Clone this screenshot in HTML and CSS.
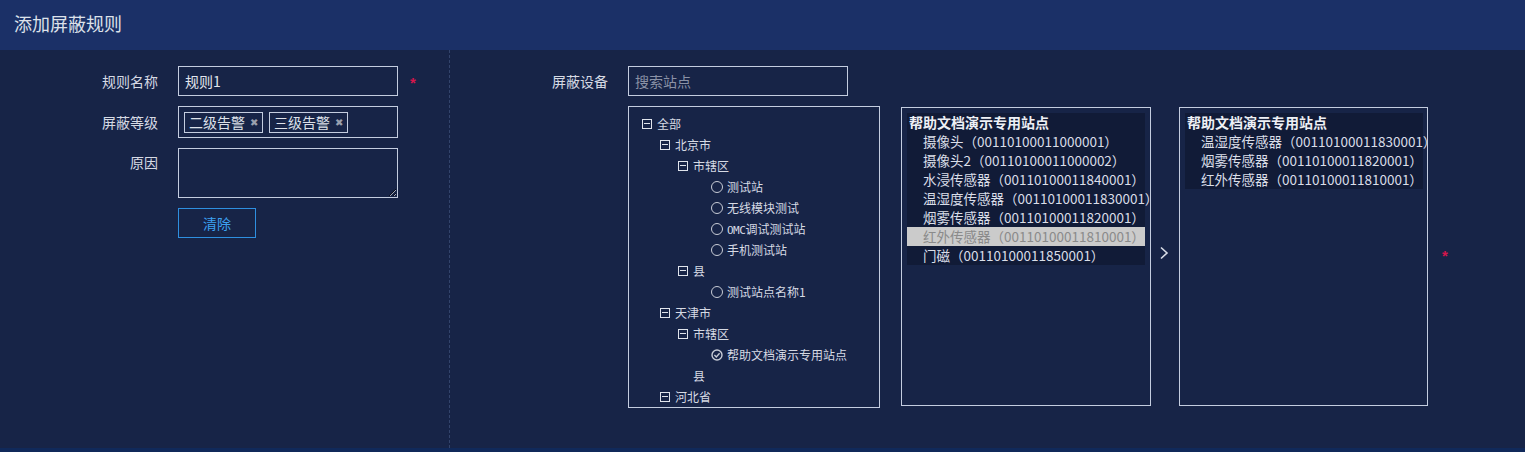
FILE: index.html
```html
<!DOCTYPE html>
<html lang="zh">
<head>
<meta charset="utf-8">
<title>添加屏蔽规则</title>
<link rel="stylesheet" href="styles.css">
</head>
<body>
<div class="page">
  <div class="header">添加屏蔽规则</div>
  <div class="main">
    <div class="left">
      <div class="row">
        <label class="label">规则名称</label>
        <input class="input" type="text" value="规则1">
        <span class="star">*</span>
      </div>
      <div class="row">
        <label class="label">屏蔽等级</label>
        <div class="tags">
          <span class="tag">二级告警<span class="tag-x">✖</span></span>
          <span class="tag">三级告警<span class="tag-x">✖</span></span>
        </div>
      </div>
      <div class="row row-top">
        <label class="label">原因</label>
        <textarea class="textarea"></textarea>
      </div>
      <div class="row">
        <span class="label"></span>
        <button class="btn">清除</button>
      </div>
    </div>
    <div class="right">
      <div class="row">
        <label class="label">屏蔽设备</label>
        <input class="input search" type="text" placeholder="搜索站点">
      </div>
      <div class="row row-top">
        <span class="label"></span>
        <div class="tree">
          <div class="node l0"><span class="sw minus"></span><span class="txt">全部</span></div>
          <div class="node l1"><span class="sw minus"></span><span class="txt">北京市</span></div>
          <div class="node l2"><span class="sw minus"></span><span class="txt">市辖区</span></div>
          <div class="node l3"><span class="sw"></span><span class="radio"></span><span class="txt">测试站</span></div>
          <div class="node l3"><span class="sw"></span><span class="radio"></span><span class="txt">无线模块测试</span></div>
          <div class="node l3"><span class="sw"></span><span class="radio"></span><span class="txt"><span class="mono">OMC</span>调试测试站</span></div>
          <div class="node l3"><span class="sw"></span><span class="radio"></span><span class="txt">手机测试站</span></div>
          <div class="node l2"><span class="sw minus"></span><span class="txt">县</span></div>
          <div class="node l3"><span class="sw"></span><span class="radio"></span><span class="txt">测试站点名称1</span></div>
          <div class="node l1"><span class="sw minus"></span><span class="txt">天津市</span></div>
          <div class="node l2"><span class="sw minus"></span><span class="txt">市辖区</span></div>
          <div class="node l3"><span class="sw"></span><span class="radio checked"><svg viewBox="0 0 12 12" width="12" height="12"><circle cx="6" cy="6" r="5" fill="none" stroke="#c8ccd6" stroke-width="1.4"/><path d="M3.4 6.1 L5.3 7.9 L8.6 4.3" fill="none" stroke="#c8ccd6" stroke-width="1.4"/></svg></span><span class="txt">帮助文档演示专用站点</span></div>
          <div class="node l2"><span class="sw"></span><span class="txt">县</span></div>
          <div class="node l1"><span class="sw minus"></span><span class="txt">河北省</span></div>
        </div>
        <div class="list list-src">
          <div class="panel">
            <div class="group">帮助文档演示专用站点</div>
            <div class="item">摄像头（00110100011000001）</div>
            <div class="item">摄像头2（00110100011000002）</div>
            <div class="item">水浸传感器（00110100011840001）</div>
            <div class="item">温湿度传感器（00110100011830001）</div>
            <div class="item">烟雾传感器（00110100011820001）</div>
            <div class="item selected">红外传感器（00110100011810001）</div>
            <div class="item">门磁（00110100011850001）</div>
          </div>
        </div>
        <div class="arrow">
          <svg viewBox="0 0 10 14" width="10" height="14"><path d="M2 1.5 L8 7 L2 12.5" fill="none" stroke="#d8dce6" stroke-width="1.6"/></svg>
        </div>
        <div class="list list-dst">
          <div class="panel">
            <div class="group">帮助文档演示专用站点</div>
            <div class="item">温湿度传感器（00110100011830001）</div>
            <div class="item">烟雾传感器（00110100011820001）</div>
            <div class="item">红外传感器（00110100011810001）</div>
          </div>
        </div>
        <span class="star star-mid">*</span>
      </div>
    </div>
  </div>
  <div class="footer"></div>
</div>
</body>
</html>
```

FILE: styles.css
```css
* { box-sizing: border-box; }
html, body { margin: 0; padding: 0; }
body {
  background: #172447;
  color: #d6dae4;
  font-family: "Noto Sans CJK SC", "Noto Sans", sans-serif;
  font-size: 14px;
}
.page { width: 1525px; height: 452px; display: flex; flex-direction: column; overflow: hidden; }
.header {
  height: 50px;
  background: #1b3067;
  color: #dde1ea;
  font-size: 18px;
  display: flex;
  align-items: center;
  padding-left: 14px;
  padding-bottom: 4px;
  flex: none;
}
.main { flex: 1; display: flex; }
.footer { height: 4px; background: #10295a; flex: none; }
.left {
  width: 450px;
  border-right: 1px dashed #33446c;
  padding-top: 16px;
  display: flex;
  flex-direction: column;
  gap: 10px;
}
.right {
  flex: 1;
  padding-top: 16px;
  display: flex;
  flex-direction: column;
  gap: 10px;
}
.row { display: flex; align-items: center; }
.row-top { align-items: flex-start; }
.label {
  width: 158px;
  margin-right: 20px;
  text-align: right;
  color: #d6dae4;
  font-size: 14px;
  flex: none;
}
.row-top .label { padding-top: 4px; }
.input {
  width: 220px;
  height: 30px;
  background: transparent;
  border: 1px solid #c4cde0;
  color: #e2e6ee;
  font-family: inherit;
  font-size: 14px;
  padding: 0 6px;
  outline: none;
}
.search::placeholder { color: #8a92a6; }
.star {
  color: #d3164c;
  font-family: "Liberation Sans", sans-serif;
  font-weight: bold;
  font-size: 15px;
  margin-left: 12px;
  line-height: 1;
  padding-top: 2px;
}
.tags {
  width: 220px;
  height: 32px;
  border: 1px solid #c4cde0;
  display: flex;
  align-items: center;
  gap: 6px;
  padding-left: 5px;
}
.tag {
  height: 21px;
  border: 1px solid #c4cde0;
  display: inline-flex;
  align-items: center;
  padding: 0 4px 0 4px;
  font-size: 14px;
  color: #dde1ea;
  line-height: 1;
}
.tag-x { color: #9aa0ae; font-size: 10px; margin-left: 5px; }
.textarea {
  width: 220px;
  height: 50px;
  background: transparent;
  border: 1px solid #c4cde0;
  color: #e2e6ee;
  resize: vertical;
  font-family: inherit;
  outline: none;
}
.btn {
  width: 78px;
  height: 30px;
  background: transparent;
  border: 1px solid #2e8fe0;
  color: #3da2f2;
  font-family: inherit;
  font-size: 14px;
  padding: 0;
}
.tree {
  width: 252px;
  height: 302px;
  border: 1px solid #c4cde0;
  padding: 6px 0 0 13px;
  overflow: hidden;
  font-size: 12px;
  flex: none;
}
.node { height: 21px; display: flex; align-items: center; white-space: nowrap; color: #d6dae4; }
.l1 { padding-left: 18px; }
.l2 { padding-left: 36px; }
.l3 { padding-left: 54px; }
.sw { width: 10px; height: 10px; margin-right: 5px; flex: none; }
.minus { border: 1px solid #e0e4ec; position: relative; }
.minus::after {
  content: "";
  position: absolute;
  left: 1px; right: 1px; top: 3px;
  height: 1px;
  background: #e0e4ec;
}
.radio {
  width: 12px; height: 12px;
  border: 1.5px solid #c8ccd6;
  border-radius: 50%;
  margin-right: 4px;
  flex: none;
}
.radio.checked { border: none; display: flex; }
.mono { font-family: "DejaVu Sans Mono", monospace; font-size: 11px; letter-spacing: -0.5px; }
.list {
  height: 299px;
  margin-top: 1px;
  border: 1px solid #c4cde0;
  padding: 5px;
  overflow: hidden;
  flex: none;
  font-size: 13.5px;
}
.list-src { width: 250px; margin-left: 21px; }
.list-dst { width: 249px; }
.panel { width: 238px; background: #111b37; white-space: nowrap; }
.group { height: 19px; line-height: 19px; padding-left: 2px; font-weight: bold; font-size: 14px; color: #eef0f5; }
.item { height: 19px; line-height: 19px; padding-left: 16px; color: #dadee8; }
.item.selected { background: #cbcbcb; color: #8a8a8a; }
.arrow { width: 28px; height: 299px; display: flex; align-items: center; justify-content: center; padding-bottom: 6px; padding-right: 2px; flex: none; }
.star-mid { align-self: center; margin-left: 14px; margin-top: -4px; padding-top: 0; }
```
